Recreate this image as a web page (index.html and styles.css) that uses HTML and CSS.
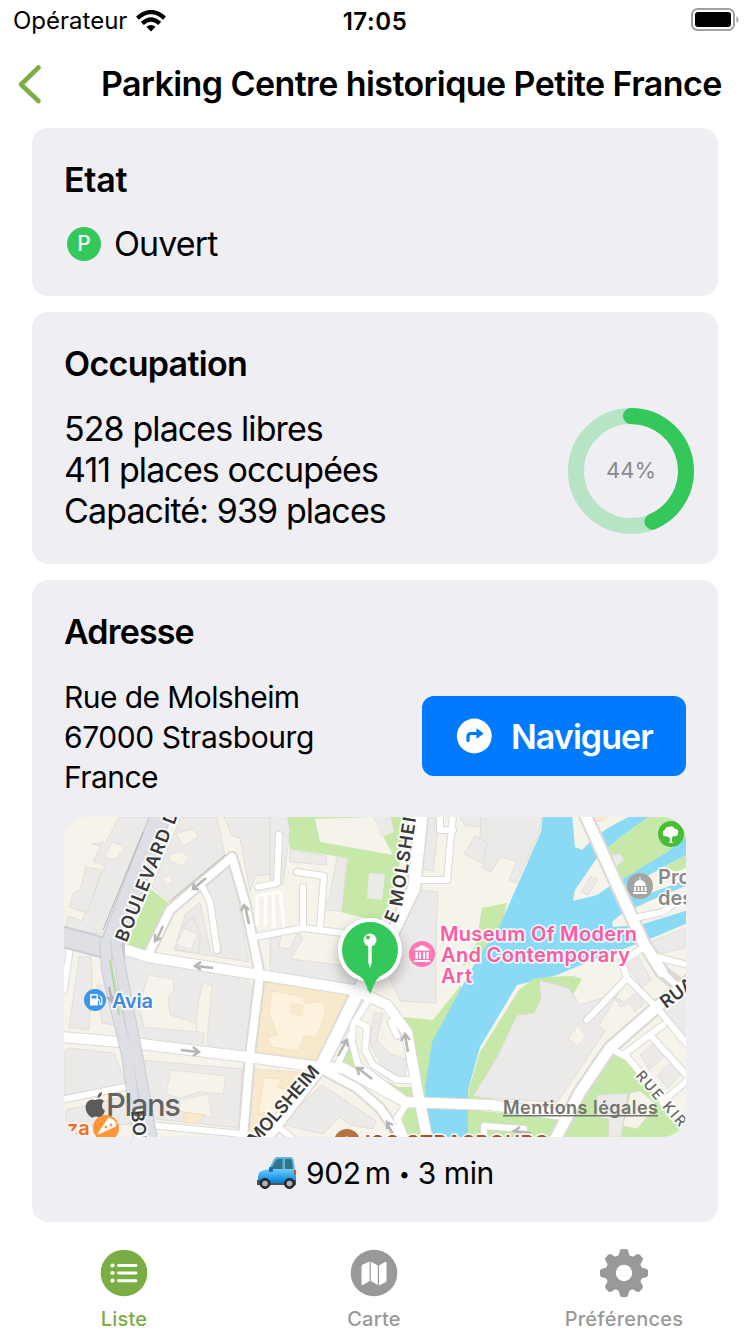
FILE: index.html
```html
<!DOCTYPE html>
<html lang="fr">
<head>
<meta charset="utf-8">
<title>Parking Centre historique Petite France</title>
<link rel="stylesheet" href="styles.css">
</head>
<body>
<div class="screen">
  <div class="status">
    <div class="carrier"><span class="carrier-name">Opérateur</span>
      <svg class="wifi" width="30" height="22" viewBox="0 0 30 22" fill="none" stroke="#000" stroke-width="4.300"><path d="M1.500 8.200Q15-4 28.500 8.200"/><path d="M6.300 13.400Q15 5.400 23.700 13.400"/><path d="M15 21.500l-4.600-4.700Q15 13 19.600 16.800Z" fill="#000" stroke="none"/></svg>
    </div>
    <div class="clock">17:05</div>
    <svg class="battery" width="48" height="24" viewBox="0 0 48 24"><rect x="1" y="1" width="42" height="21" rx="5.500" fill="none" stroke="#a0a0a0" stroke-width="2"/><rect x="4" y="4" width="36" height="15" rx="3" fill="#000"/><path d="M45.500 8q2 1.500 2 3.500t-2 3.500Z" fill="#a0a0a0"/></svg>
  </div>
  <header class="nav">
    <svg class="back" width="26" height="42" viewBox="0 0 26 42" fill="none" stroke="#7bad45" stroke-width="4.600" stroke-linecap="round" stroke-linejoin="round"><path d="M21.500 4.500 4 21.500 21.500 38"/></svg>
    <h1 class="title">Parking Centre historique Petite France</h1>
  </header>
  <main class="cards">
    <section class="card card-state">
      <h2 class="heading h-state">Etat</h2>
      <div class="state-row"><span class="badge">P</span><span class="open">Ouvert</span></div>
    </section>
    <section class="card card-occ">
      <h2 class="heading h-occ">Occupation</h2>
      <div class="occ-row">
        <div class="occ-lines"><div>528 places libres</div><div>411 places occupées</div><div>Capacité: 939 places</div></div>
        <div class="ring">
          <svg width="126" height="126" viewBox="0 0 126 126" fill="none" stroke="#34c759" stroke-width="16"><circle cx="63" cy="63" r="55" stroke="#b7e4c5"/><path d="M63 8A55 55 0 0 1 84.500 113.600" stroke-linecap="round"/></svg>
          <span class="percent">44%</span>
        </div>
      </div>
    </section>
    <section class="card card-addr">
      <h2 class="heading h-addr">Adresse</h2>
      <div class="addr-row">
        <div class="addr"><div class="a1">Rue de Molsheim</div><div>67000 Strasbourg</div><div class="a1">France</div></div>
        <div class="go"><svg width="36" height="36" viewBox="0 0 36 36"><circle cx="18.300" cy="18" r="17.400" fill="#fff"/><path d="M12 22.500V18.500Q12 15.500 15 15.500H21" fill="none" stroke="#007aff" stroke-width="3.200" stroke-linecap="round"/><path d="M20.400 11.500q0-1.500 1.300-.6l5 3.800q.9.800 0 1.600l-5 3.800q-1.300.8-1.300-.6Z" fill="#007aff"/></svg><span class="go-text">Naviguer</span></div>
      </div>
      <div class="map">
      <svg width="622" height="320" viewBox="64 817 622 320">
        <defs><filter id="shadow" x="-50%" y="-50%" width="200%" height="200%"><feGaussianBlur stdDeviation="7"/></filter></defs>
        <rect x="64" y="817" width="622" height="320" fill="#f6f3ea"/>
        <!-- parks -->
        <g fill="#c6e8a8">
          <path d="M151 889l18 14-23 48-20-6Z"/>
          <path d="M287 815h122l-16 83-13 24-39-10 7-54-58-9Z"/>
          <path d="M403 1017l30 3 28-35 0 152h-64l11-35-38-24 3-4 25 13h18Z"/>
          <path d="M340 1063l8-29 6-9 3 40 24 20-22-14Z"/>
          <path d="M482 908l25-5-8 35-22 22-15 6 14-22Z"/>
          <path d="M612 1052l14 6 62 68v12H560l28-52Z"/>
          <path d="M460 1109l103 10-6 20H460Z"/>
        </g>
        <path d="M315 819l58-2 20 38-73-13Z" fill="#f6f3ea"/>
        <path d="M374 815h16l4 17-14 5Z" fill="#ebeae9"/><path d="M369 873l16 1-3 26-15-2Z" fill="#ebeae9"/>
        <!-- river -->
        <path d="M543 815H688V923L645 941 593 960 557 975 517 985 480 1047 468 1090V1138H430L425 1088 432 1042 460 990 478 958 500 925 541 832Z" fill="#8adaf5"/>
        <path d="M572 815l3 32 7 3 12-12 14-10 24-13Z" fill="#f6f3ea"/>
        <path d="M603 852l20-17 24-17 13-3h28v20l-21 17-44 25-26 18-24 6 2-11 22-32Z" fill="#f6f3ea"/>
        <path d="M603 851l20-16 24-17 13-3h28v20l-21 17-44 27Z" fill="#c6e8a8"/>
        <path d="M686 855l-19 10-27 15-15 13 15 4 46-17Z" fill="#f6f3ea"/><path d="M688 854l-24 13 12 5 12-5Z" fill="#c6e8a8"/>
        <path d="M613 927l-1-5 8-7 27-13 41-17v25l-48 15Z" fill="#f6f3ea"/>
        <path d="M582 979l-9-3-26 1-14 2-14 11-39 62-12 40v46h9l3-30 20-16 17-30 14 1 10-7 1-20 12-9Z" fill="#c6e8a8"/>
        <path d="M480 1093l33-29-13 34-20 0Z" fill="#f6f3ea"/>
        <!-- buildings -->
        <g fill="#ebeae9" stroke="#d6d4cf" stroke-width=".6">
          <path d="M106 842l13-25h34l-49 117-20-2-18-5 2-11 14 5 23-55-12-5 8-15-10-2Z"/>
          <path d="M80 890l6-23 16 3-15 43-18-6 5-15Z"/>
          <path d="M181 817h36l8 39-56 45-17-14Z"/>
          <path d="M224 817h56v8l-10 6 7 42-22 3-5 16-10-54-8-2Z"/>
          <path d="M225 864l7 1 17 97-75-12 11-35 15-13 11 52 10-4-11-53-16-8Z"/><path d="M177 950l22 3 1-20-7-17-14 15Z"/>
          <path d="M120 957l34 4 90 16 8 10-3 68-113-15-14-68Z"/>
          <path d="M79 957h12l1 25-3 48-20-3Z"/><path d="M97 985h16l6 41-17-3Z"/>
          <path d="M69 1048l45 5 12 30-62 14V1052Z"/><path d="M66 1110l60-14 8 28-68 3Z"/>
          <path d="M141 1060l101 9-2 50-1 9-93-10Z"/>
          <path d="M290 849l36 7 1 9-37-3Z"/><path d="M337 857l10 1-5 53-18-1-5-9 10-1Z"/>
          <path d="M270 815h17l3 15-7 54-13-4Z"/>
          <path d="M270 938l11-2-2 11 10 2 9-16 5 5-12 21 72 9-1 17-92-12Z"/>
          <path d="M422 817h14l1 24-4 30-12-2Z"/><path d="M458 815l28 0-1 13-20-3Z"/><path d="M475 836l16 7 8 10-9 14-26-13Z"/>
          <path d="M421 890l17 2-2 42 0 69-36-2-15-32 11-42Z"/>
          <path d="M481 815h62l-5 21-22 47-7-3 8-19-17-4-9 15-8-4 4-25-7-5Z"/>
          <path d="M590 877l-9 15 7 3 10-16Z"/><path d="M608 856l12-3 4 7-9 8Z"/>
          <path d="M650 942l35-14v20l-35 8Z"/><path d="M627 965l12-8 12 23-9 8Z"/>
          <path d="M569 988l11 17 13-4 26-9-20 33 6 6-33 50-15 21-71-4-13-2 24-39 20-42 17-2 7-15-2-18Z"/>
          <path d="M597 1095l31-2-7 44h-13l1-18-12-2Z"/>
          <path d="M640 1055l16-13 10 13-17 15Z"/><path d="M657 1075l16-14 9 11-14 17Z"/><path d="M662 1003l26-27v64l-23-26Z"/>
          <path d="M615 997l9 5 14-10 6 12-9 8-5-9-10 4Z"/>
          <path d="M322 1085l54 36-3 8-23-4-10-8-17 17-43-10Z"/>
          <path d="M374 1013h9l-6 27 12 13 18 7-2 17-22-9-13-24Z"/>
        </g>
        <g fill="#f6f3ea" stroke="#d8d5cb" stroke-width=".5">
          <path d="M148 975l25 4 1 11-6 7 2 18 26 8 2 9-54-5-5-20Z"/><path d="M203 983l9 2-6 65-3-2 1-15-8-2 2-26Z"/>
          <path d="M171 1070l55 6-3 18-24-2-19 6-14-4Z"/><path d="M180 1100l28-6 4 23-33-6Z"/>
          <path d="M170 855l9-4 10 5-6 10-13-5Z"/><path d="M104 858l8-16 13 5-9 12Z"/><path d="M176 833l18-4 4 8-15 9Z"/>
          <path d="M630 1093l10-2 17 14-20 24-14-3Z"/><path d="M568 1038l10-13 8 12-9 9Z"/>
          <path d="M162 878l8-3 3 7-7 4Z"/><path d="M176 944l9-16 12 6-6 16Z"/>
        </g>
        <!-- hospital blocks -->
        <g fill="#f8e8cc" stroke="#ead6b5" stroke-width=".6"><path d="M264 982l84 12-31 66-61-8Z"/><path d="M255 1069l57 4-62 65h-5Z"/><path d="M590 815h20l-8 6h-8ZM184 1112l22 3-10 9-12-2Z"/></g>
        <g fill="#fdf2dd" stroke="#ead9bb" stroke-width=".5"><path d="M272 991l28 5 6 8 16-3 4 11-10 26-11-3-7 16-27-4-4-10 10-2-8-24Z"/><path d="M264 1078l18 1-6 8 17 4-18 29-9-8-8 2 4-23Z"/></g>
        <path d="M291 1003l13 2-1 12-13-3Z" fill="#f8e8cc"/>
        <!-- road casings -->
        <g fill="none" stroke="#dbdad7" stroke-linecap="round" stroke-linejoin="round">
          <path stroke-width="12" d="M124 949L148 957 260 975 353 990 370 997 387 1005 407 1032 417 1088 427 1137M260 975L250 1055 243 1137M148 955L170 910 232 857 245 902 260 975M62 1037L133 1043 247 1057 320 1067 343 1068 380 1088 405 1102 490 1105 563 1115M320 1068L357 1088 380 1108 400 1137"/>
          <path stroke-width="8" d="M203 888l7 14 7 48M255 937L303 928 343 933M303 928V887M320 927L324 876 297 872M420 880H447L453 815M440 815V830H453M258 887l19-4 2-48M407 1103l-10 15 8 19M367 1002L353 1025 352 1042 358 1065 385 1085 407 1101M356 1021L367 1027 365 1050 373 1065 397 1080H413M391 1022l6 14M635 918L663 912 686 895M627 978L587 1020M647 945L622 962 627 978 657 1008 686 1043M662 972L688 996M657 957l31 8M613 1050L627 1057 686 1126M623 1055L663 1025M652 1037L688 1077M662 1102L688 1080M70 947L64 990M60 1100L125 1087M150 1125L242 1134M270 1120L292 1138M484 1136V1126l40 3M337 1066l14-32"/>
          <path stroke-width="15" d="M422 810L414 888 393 932 358 992 322 1065 265 1139M555 1140L580 1092 610 1048 657 1007 690 980M583 810L643 942 662 972 688 992"/>
        </g>
        <g fill="none" stroke="#fff" stroke-linecap="round" stroke-linejoin="round">
          <path stroke-width="10" d="M124 949L148 957 260 975 353 990 370 997 387 1005 407 1032 417 1088 427 1137M62 1037L133 1043 247 1057 320 1067 343 1068 380 1088 405 1102 490 1105 563 1115"/>
          <path stroke-width="8" d="M260 975L250 1055 243 1137M148 955L170 910 232 857 245 902 260 975M320 1068L357 1088 380 1108 400 1137"/>
          <path stroke-width="6" d="M203 888l7 14 7 48M255 937L303 928 343 933M303 928V887M320 927L324 876 297 872M420 880H447L453 815M440 815V830H453M258 887l19-4 2-48M407 1103l-10 15 8 19M367 1002L353 1025 352 1042 358 1065 385 1085 407 1101M356 1021L367 1027 365 1050 373 1065 397 1080H413M391 1022l6 14M635 918L663 912 686 895M627 978L587 1020M647 945L622 962 627 978 657 1008 686 1043M662 972L688 996M657 957l31 8M613 1050L627 1057 686 1126M623 1055L663 1025M652 1037L688 1077M662 1102L688 1080M70 947L64 990M60 1100L125 1087M150 1125L242 1134M270 1120L292 1138M484 1136V1126l40 3M337 1066l14-32"/>
          <path stroke-width="12" d="M422 810L414 888 393 932 358 992 322 1065 265 1139"/><path stroke-width="10.500" d="M555 1140L580 1092 610 1048 657 1007 690 980M583 810L643 942 662 972"/>
          <path stroke-width="3" d="M257 925v-26q0-4 4-4l18-3M265 925l1-31M274 926l-1-32M284 926l-4-34"/>
        </g>
        <!-- boulevard -->
        <g fill="none"><path d="M163 810L112 942M60 936L105 948H125" stroke="#c9ccd2" stroke-width="22"/><path d="M163 810L112 942" stroke="#dddfe4" stroke-width="19.500"/><path d="M60 936L105 948H122" stroke="#dddfe4" stroke-width="18"/>
        <path d="M105 940L107 970 127 1055 139 1140M116 945L121 972 137 1055 152 1140" stroke="#c9ccd2" stroke-width="12"/><path d="M105 940L107 970 127 1055 139 1140M116 945L121 972 137 1055 152 1140" stroke="#dddfe4" stroke-width="10"/><path d="M110 960l9 55" stroke="#b3dc96" stroke-width="2"/><path d="M143 832L103 930" stroke="#aaa69f" stroke-width=".8"/><path d="M225 855L169 902" stroke="#aaa69f" stroke-width=".8"/></g>
        <!-- one-way arrows -->
        <g fill="none" stroke="#b6b5b3" stroke-width="2.500">
          <path d="M206 878L193 889M199 889l-6 0 1-6M163 926l-7 15M155 934v7l6-3M249 924l-4-18M241 911l3-6 5 5M213 968l-17-2M201 962l-6 4 6 4M181 1050l17 2M193 1047l6 5-6 4M338 1056l9-16M341 1043l6-3 1 7M372 1079l-14-11M359 1075l-2-7 7 0M408 1052l-3-17M401 1041l4-7 5 6M393 1134l-6-11M387 1129v-7l6 3M531 1133l-17-2M520 1127l-6 4 6 3M109 987l3 15M107 997l5 5 1-6"/>
        </g>
        <!-- street names -->
        <g class="street">
          <text transform="translate(126.500 943) rotate(-68)" font-size="18" textLength="152">BOULEVARD DE</text>
          <text transform="translate(395.500 924) rotate(-66)" font-size="18">E</text>
          <text transform="translate(402 907) rotate(-81)" font-size="18" textLength="108">MOLSHEIM</text>
          <text transform="translate(256 1146) rotate(-49)" font-size="18" textLength="98">MOLSHEIM</text>
          <text transform="translate(666 1009) rotate(-37)" font-size="18">RUA</text>
          <text class="minor" transform="translate(635 1076) rotate(49)" font-size="14.500" textLength="68">RUE KIR</text>
          <text transform="translate(131 1111) rotate(84)" font-size="18">BOU</text>
        </g>
        <g class="poi" fill="#ff5aa0"><text x="440" y="941" textLength="197">Museum Of Modern</text><text x="441" y="962" textLength="189">And Contemporary</text><text x="441" y="983" textLength="31">Art</text></g>
        <circle cx="422" cy="954" r="13" fill="#ff77b4"/><path d="M414.500 950.500v-1.500l7.500-4 7.500 4v1.500ZM415.500 952h2.300v7h-2.300ZM419 952h2v7h-2ZM423 952h2v7h-2ZM426.500 952h2.200v7h-2.200ZM414 960h16v2h-16Z" fill="#fff"/>
        <g class="poi" fill="#8a8987"><text x="658" y="884">Prome</text><text x="658" y="905">des</text></g>
        <circle cx="640" cy="886" r="13" fill="#a6a4a1"/><path d="M639.500 877h1v3q5 1 5.500 6h-12q.500-5 5.500-6ZM634 887h2v4h-2ZM637.500 887h2v4h-2ZM641 887h2v4h-2ZM644.500 887h2v4h-2ZM633 892h14v2h-14Z" fill="#fff"/>
        <circle cx="671" cy="834" r="13" fill="#48bd36"/><path d="M670 842v-4l-4-2q-3 1-3-2-1-3 2-4 1-4 4-3 4-2 6 2 4 0 3 4 0 4-5 3l-1 2v4l2 1h-6Z" fill="#fff"/>
        <circle cx="95" cy="1000" r="11" fill="#3d94ee"/><path d="M91 994h6q1 0 1 1v4h1q1 0 1 2v2.500h1.200V998l-2-2 .8-.8 2.500 2.500v5.800q0 1.800-1.800 1.800T99 1003.500V1000.500H98V1005.500H90V995q0-1 1-1Zm.5 1.500v3h5v-3Z" fill="#fff"/>
        <text class="poi" x="112" y="1007.500" fill="#3d89df" textLength="41">Avia</text>
        <path d="M97.500 1098q0-5 4.500-6 0 5-4.500 6ZM104 1101q-3-3-7-1.500-2 1-4 0-6 0-7.500 6.500 0 8 6 11.500 2 0 4-1 2 0 4 1 3 0 5.500-7-3-1-3-5 0-3 2-4.500Z" fill="#3c3c3c" opacity=".82"/>
        <text class="plans" x="106" y="1115.500" textLength="75" fill="#4b4b4b" fill-opacity=".85">Plans</text>
        <circle cx="106" cy="1128" r="13" fill="#fd9638"/><path d="M98 1134l10-15q6 1 8 7ZM108 1118q6 1 9 6" fill="#fff" stroke="#fff"/><circle cx="106" cy="1127" r="1.500" fill="#fd9638"/><circle cx="111" cy="1125" r="1.500" fill="#fd9638"/>
        <text class="poi" x="67" y="1135" fill="#f46b22">za</text>
        <circle cx="347" cy="1142" r="13" fill="#b5713f"/><circle cx="347" cy="1142" r="5.500" fill="#fff"/>
        <text class="poi" x="365" y="1149.500" fill="#a4562a" textLength="184">ISO STRASBOURG</text>
        <g class="legal"><text x="503" y="1114" textLength="155">Mentions légales</text><path d="M503 1115.800h155" stroke="#74756f" stroke-width="1.500"/></g>
        <!-- marker -->
        <circle cx="370" cy="956" r="32" fill="#000" opacity=".28" filter="url(#shadow)"/>
        <circle cx="370" cy="950" r="32" fill="#fff"/><path d="M370 922a28 28 0 0 1 13 52.800q-6 2-9 10l-4 9.200-4-9.200q-3-8-9-10A28 28 0 0 1 370 922Z" fill="#34c759"/>
        <circle cx="370" cy="940" r="6.500" fill="#fff"/><path d="M368.300 945h3.400v18l-1.700 5-1.700-5Z" fill="#fff"/><circle cx="368" cy="937.500" r="2" fill="#34c759"/>
      </svg>
      </div>
      <div class="route">
        <svg class="car" width="42" height="36" viewBox="0 0 42 36"><defs><linearGradient id="body" x1="0" y1="0" x2="0" y2="1"><stop offset="0" stop-color="#72c8f5"/><stop offset=".6" stop-color="#1b9bed"/><stop offset="1" stop-color="#0870bd"/></linearGradient></defs><path d="M13 14L18 4q1-2 4-2h12q3 0 3.500 3L39 15Z" fill="#5bb5d8"/><path d="M15 14l4.500-8q1-2 3-2h4v11ZM29 4h5q1.500 0 2 2l1 9h-8Z" fill="#327586"/><path d="M3 18q2-3 11-4h24q2 2 2 7v9H2v-8Z" fill="url(#body)"/><path d="M1 25h6l2 3h20l3-3h8v5H1Z" fill="#4b555e"/><path d="M38 15h2v5h-2Z" fill="#df473f"/><rect x="13" y="12" width="4" height="5" rx="1.500" fill="#0870bd"/><g fill="#30343a" stroke="#17191b"><circle cx="9" cy="28.500" r="5"/><circle cx="33.500" cy="28.500" r="5"/></g><g fill="#aeb4b9"><circle cx="9" cy="28.500" r="2.800"/><circle cx="33.500" cy="28.500" r="2.800"/></g></svg>
        <span class="route-text">902<span class="thin"></span>m <span class="dot">•</span> 3 min</span>
      </div>
    </section>
  </main>
  <nav class="tabs">
    <div class="tab active"><svg width="50" height="50" viewBox="0 0 50 50"><circle cx="25" cy="25" r="23.300" fill="#7bad45"/><g fill="#fff"><circle cx="13.500" cy="17.500" r="2.100"/><circle cx="13.500" cy="25" r="2.100"/><circle cx="13.500" cy="32.700" r="2.100"/></g><path d="M19.500 17.500H37M19.500 25H37M19.500 32.700H37" stroke="#fff" stroke-width="2.900" stroke-linecap="round"/></svg><span>Liste</span></div>
    <div class="tab"><svg width="50" height="50" viewBox="0 0 50 50"><circle cx="25" cy="25" r="23.300" fill="#999"/><path d="M20.500 13.500V33L14 37q-1.500.5-1.500-1V18.500q0-1 1-1.700ZM21.700 13.500l7.100 4V37l-7.100-4ZM30 17.500l6-3.500q1.500-.5 1.500 1V32.500q0 1-1 1.700L30 37.500Z" fill="#fff"/></svg><span>Carte</span></div>
    <div class="tab"><svg width="50" height="50" viewBox="0 0 50 50"><g fill="#999"><circle cx="25" cy="25" r="18.500"/><path id="tooth" d="M19 9l2-6.500q.4-1.500 2-1.500h4q1.600 0 2 1.500L31 9Z"/><use href="#tooth" transform="rotate(45 25 25)"/><use href="#tooth" transform="rotate(90 25 25)"/><use href="#tooth" transform="rotate(135 25 25)"/><use href="#tooth" transform="rotate(180 25 25)"/><use href="#tooth" transform="rotate(225 25 25)"/><use href="#tooth" transform="rotate(270 25 25)"/><use href="#tooth" transform="rotate(315 25 25)"/></g><circle cx="25" cy="25" r="8.200" fill="#fff"/></svg><span>Préférences</span></div>
  </nav>
</div>
</body>
</html>
```
FILE: styles.css
```css
* { box-sizing: border-box; }
body { margin: 0; background: #fff; color: #000; font-family: Inter, "Liberation Sans", sans-serif; }
.screen { width: 750px; height: 1334px; display: flex; flex-direction: column; overflow: hidden; }
.status { height: 40px; display: grid; grid-template-columns: 1fr auto 1fr; align-items: center; padding: 0 11px 0 11px; font-size: 24px; }
.carrier { display: flex; align-items: center; gap: 9px; line-height: 40px; padding-left: 2px; }
.carrier-name { margin-top: 1px; }
.clock { font-weight: 600; letter-spacing: 0.6px; margin-top: 1px; }
.battery { justify-self: end; margin-top: -2px; }
.nav { height: 88px; display: flex; align-items: center; padding: 0 0 0 17px; gap: 58px; }
.title { margin: 0; font-size: 34px; font-weight: 600; letter-spacing: -0.58px; line-height: 40px; white-space: nowrap; }
.cards { display: flex; flex-direction: column; gap: 16px; padding: 0 32px; }
.card { background: #efeef3; border-radius: 16px; padding: 32px 32px 0; }
.card-state { height: 168px; }
.card-occ { height: 252px; }
.card-addr { height: 642px; }
.heading { margin: 0 0 24px; font-size: 34px; font-weight: 600; line-height: 40px; height: 40px; letter-spacing: -0.3px; }
.h-occ { letter-spacing: -0.7px; }
.h-addr { letter-spacing: -0.85px; }
.state-row { display: flex; align-items: center; gap: 13px; padding-left: 3px; font-size: 34px; line-height: 41px; }
.badge { width: 34px; height: 34px; border-radius: 50%; background: #34c759; color: #fff; font-size: 21px; font-weight: 500; line-height: 34px; text-align: center; }
.open { letter-spacing: -0.9px; margin-top: -1px; }
.occ-row { display: flex; justify-content: space-between; align-items: flex-start; }
.occ-lines { font-size: 34px; line-height: 41px; letter-spacing: -0.9px; }
.ring { display: grid; place-items: center; margin-right: -8px; }
.ring > * { grid-area: 1 / 1; }
.percent { font-size: 22px; color: #8a8a8e; margin-top: -2px; }
.addr-row { display: flex; justify-content: space-between; align-items: center; height: 120px; }
.addr { font-size: 30px; line-height: 40px; letter-spacing: -0.42px; padding-top: 1px; }
.a1 { letter-spacing: -0.58px; }
.go { width: 264px; height: 80px; border-radius: 12px; background: #007aff; color: #fff; display: flex; align-items: center; padding-left: 34px; gap: 19px; font-size: 34px; font-weight: 600; letter-spacing: -0.95px; }
.map { margin-top: 21px; width: 622px; height: 320px; border-radius: 24px; overflow: hidden; }
.map svg { display: block; }
.street text { font-weight: 600; fill: #3b3a3a; stroke: #fff; stroke-opacity: .8; stroke-width: 4px; paint-order: stroke; stroke-linejoin: round; }
.street .minor { font-weight: 500; fill: #656463; }
.poi { font-size: 20px; font-weight: 600; stroke: #fff; stroke-opacity: .8; stroke-width: 3.5px; paint-order: stroke; stroke-linejoin: round; }
.plans { font-size: 31px; font-weight: 500; }
.legal text { font-size: 18px; font-weight: 600; fill: #74756f; }
.route { display: flex; justify-content: center; align-items: center; height: 40px; margin-top: 16px; gap: 8px; font-size: 30px; }
.thin { display: inline-block; width: 4px; }
.dot { display: inline-block; font-size: 20px; width: 11px; text-align: center; vertical-align: 3px; line-height: 20px; }
.route-text { letter-spacing: -0.4px; }
.tabs { display: grid; grid-template-columns: repeat(3, 250px); padding-top: 26px; margin-left: -1px; }
.tab { display: flex; flex-direction: column; align-items: center; font-size: 20px; font-weight: 500; line-height: 24px; color: #999; gap: 9px; }
.tab span { letter-spacing: 0.25px; }
.tab.active { color: #7bad45; }
```
